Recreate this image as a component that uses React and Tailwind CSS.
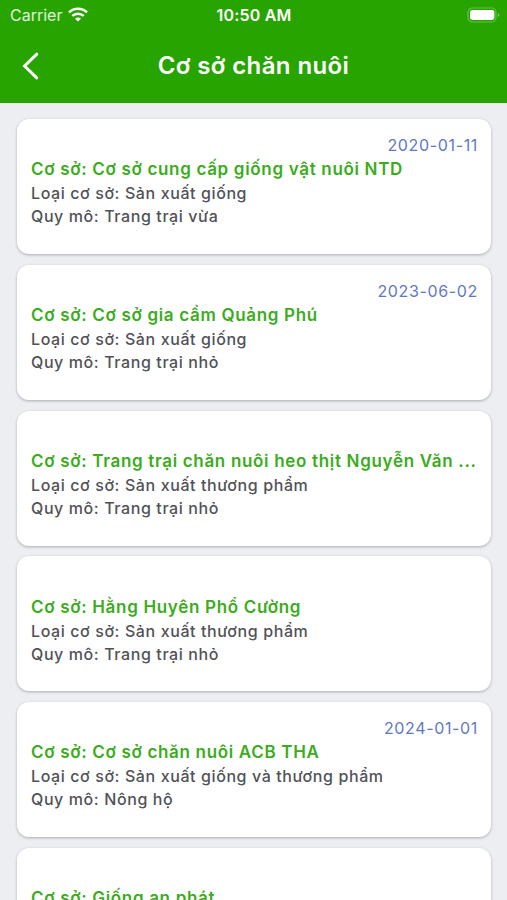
const facilities = [
  { date: "2020-01-11", name: "Cơ sở cung cấp giống vật nuôi NTD", type: "Sản xuất giống", scale: "Trang trại vừa" },
  { date: "2023-06-02", name: "Cơ sở gia cầm Quảng Phú", type: "Sản xuất giống", scale: "Trang trại nhỏ" },
  { date: "", name: "Trang trại chăn nuôi heo thịt Nguyễn Văn ...", type: "Sản xuất thương phẩm", scale: "Trang trại nhỏ" },
  { date: "", name: "Hằng Huyên Phổ Cường", type: "Sản xuất thương phẩm", scale: "Trang trại nhỏ" },
  { date: "2024-01-01", name: "Cơ sở chăn nuôi ACB THA", type: "Sản xuất giống và thương phẩm", scale: "Nông hộ" },
  { date: "", name: "Giống an phát", type: "", scale: "" },
];

const BackIcon = () => (
  <svg width="18" height="28" viewBox="0 0 18 28" fill="none" stroke="white" strokeWidth="3">
    <path d="M15.8 2.2 3.6 14l12.2 11.8" strokeLinecap="round" />
  </svg>
);

const WifiIcon = () => (
  <svg width="20" height="15" viewBox="0 0 20 15" fill="none" stroke="white" strokeWidth="2.5">
    <path d="M1 5.4C6 .6 14 .6 19 5.4" />
    <path d="M4.3 8.9C7.5 5.9 12.5 5.9 15.7 8.9" />
    <path d="M10.7 13.9c-.4.4-1 .4-1.4 0L7 11.6c1.6-1.6 4.4-1.6 6 0Z" fill="white" stroke="none" />
  </svg>
);

const BatteryIcon = () => (
  <svg width="34" height="16" viewBox="0 0 34 16" fill="none">
    <rect x="1" y="1" width="28" height="14" rx="4.5" stroke="white" strokeOpacity="0.3" strokeWidth="1.2" />
    <rect x="3" y="3" width="24.4" height="10" rx="2.4" fill="white" />
    <path d="M31 6v4c1.8-.6 1.8-3.4 0-4Z" fill="white" fillOpacity="0.4" />
  </svg>
);

const FacilityCard = ({ facility }) => (
  <div className="h-[135px] shrink-0 rounded-xl bg-white px-3.5 pt-[15.5px] shadow-[0_1px_3px_rgba(0,0,0,0.28)]">
    <p className={`-mr-px text-right text-base leading-[21px] tracking-[0.65px] text-[#6079c2] ${facility.date ? 'h-[21px]' : 'h-[22px]'}`}>
      {facility.date}
    </p>
    <h2 className="-mr-1 truncate text-[17px] font-semibold leading-[26px] tracking-[0.68px] text-[#3bac1c]">
      Cơ sở: {facility.name}
    </h2>
    {facility.type && (
      <div className="text-base font-medium leading-[23px] tracking-[0.6px] text-[#515257]">
        <p>Loại cơ sở: {facility.type}</p>
        <p>Quy mô: {facility.scale}</p>
      </div>
    )}
  </div>
);

export default function App() {
  return (
    <div className="flex h-[900px] w-[507px] flex-col overflow-hidden bg-[#edeef2] font-['Inter','Liberation_Sans',sans-serif]">
      <header className="h-[103px] shrink-0 bg-[#27a400] text-white">
        <div className="grid h-[29px] grid-cols-3 items-center pl-2.5 pr-[6px]">
          <div className="flex items-center gap-1.5 text-base text-white/85">
            <span>Carrier</span>
            <WifiIcon />
          </div>
          <span className="pr-[3px] text-center text-base font-semibold tracking-[0.2px]">10:50 AM</span>
          <div className="flex justify-end">
            <BatteryIcon />
          </div>
        </div>
        <div className="grid h-[74px] grid-cols-[60px_1fr_60px] items-center">
          <button className="pb-px pl-[21px]" aria-label="Back">
            <BackIcon />
          </button>
          <h1 className="text-center text-2xl font-semibold tracking-[0.4px]">Cơ sở chăn nuôi</h1>
        </div>
      </header>

      <main className="flex flex-col gap-[10.7px] pl-[17px] pr-4 pt-[16.4px]">
        {facilities.map((facility) => (
          <FacilityCard key={facility.name} facility={facility} />
        ))}
      </main>
    </div>
  );
}
